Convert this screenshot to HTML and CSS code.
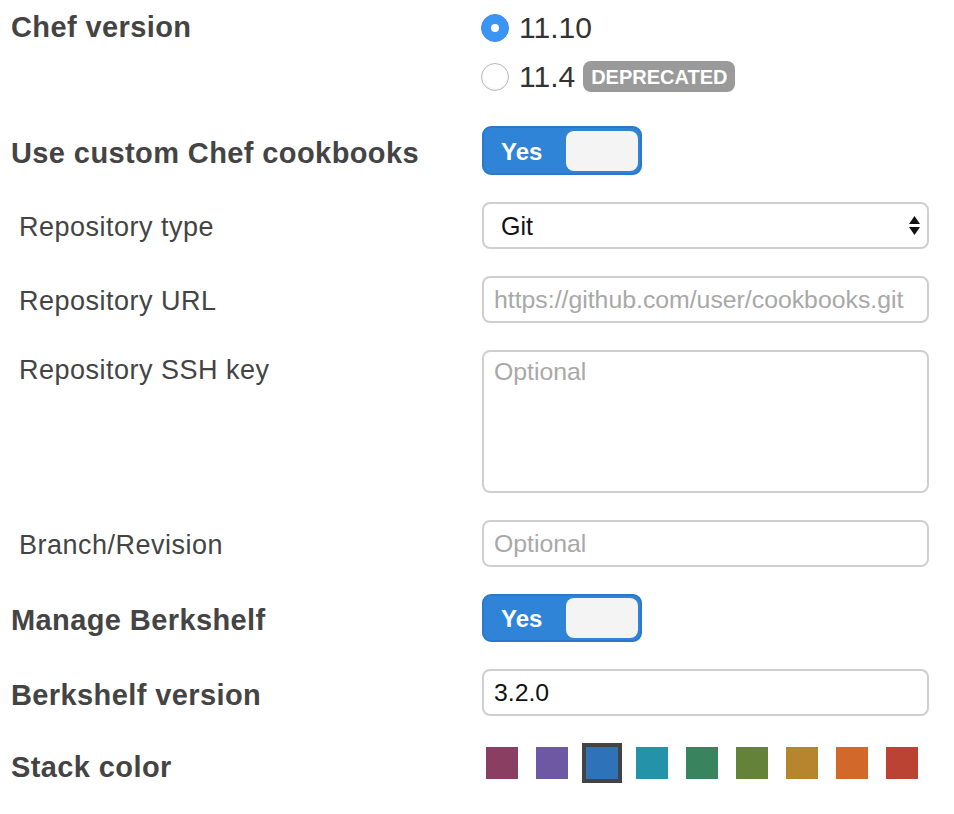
FILE: index.html
```html
<!DOCTYPE html>
<html lang="en">
<head>
<meta charset="utf-8">
<title>Chef settings</title>
<link rel="stylesheet" href="styles.css">
</head>
<body>
<div class="form">
  <div class="row row-radio">
    <div class="label label-radio">Chef version</div>
    <div class="radios">
      <div class="radio-line"><span class="radio checked"></span><span class="radio-text">11.10</span></div>
      <div class="radio-line"><span class="radio"></span><span class="radio-text">11.4</span><span class="badge">DEPRECATED</span></div>
    </div>
  </div>

  <div class="row">
    <div class="label">Use custom Chef cookbooks</div>
    <div class="toggle"><span class="toggle-on">Yes</span><span class="knob"></span></div>
  </div>

  <div class="row">
    <div class="label sub">Repository type</div>
    <div class="select-wrap">
      <select class="select"><option>Git</option></select>
      <svg class="select-arrows" width="11" height="19" viewBox="0 0 11 19"><polygon points="0,8 5.5,0 11,8" fill="#111"/><polygon points="0,11 11,11 5.5,19" fill="#111"/></svg>
    </div>
  </div>

  <div class="row">
    <div class="label sub">Repository URL</div>
    <input class="input" type="text" placeholder="https://github.com/user/cookbooks.git">
  </div>

  <div class="row row-top">
    <div class="label sub label-top">Repository SSH key</div>
    <textarea class="textarea" placeholder="Optional"></textarea>
  </div>

  <div class="row">
    <div class="label sub">Branch/Revision</div>
    <input class="input" type="text" placeholder="Optional">
  </div>

  <div class="row">
    <div class="label">Manage Berkshelf</div>
    <div class="toggle toggle-short"><span class="toggle-on">Yes</span><span class="knob"></span></div>
  </div>

  <div class="row">
    <div class="label">Berkshelf version</div>
    <input class="input" type="text" value="3.2.0">
  </div>

  <div class="row row-top">
    <div class="label label-stack">Stack color</div>
    <div class="swatches">
      <span class="swatch c1"></span>
      <span class="swatch c2"></span>
      <span class="swatch c3 selected"></span>
      <span class="swatch c4"></span>
      <span class="swatch c5"></span>
      <span class="swatch c6"></span>
      <span class="swatch c7"></span>
      <span class="swatch c8"></span>
      <span class="swatch c9"></span>
    </div>
  </div>
</div>
</body>
</html>
```

FILE: styles.css
```css
* { box-sizing: border-box; }

html, body {
  margin: 0;
  padding: 0;
  background: #fff;
}

body {
  font-family: "Liberation Sans", Arial, "Helvetica Neue", sans-serif;
  color: #444;
}

.form {
  padding: 3px 0 0 11px;
}

.row {
  display: grid;
  grid-template-columns: 471px 447px;
  align-items: center;
  margin-bottom: 27px;
}

.row-radio {
  align-items: start;
  margin-bottom: 25px;
}

.row-top {
  align-items: start;
}

.label {
  font-size: 29px;
  font-weight: bold;
  letter-spacing: 0.4px;
  color: #444;
  padding-top: 5px;
  white-space: nowrap;
}

.label.sub {
  font-weight: normal;
  font-size: 27px;
  letter-spacing: 0.5px;
  padding-left: 8px;
  padding-top: 3px;
}

.label-radio {
  line-height: 49px;
  padding-top: 0;
}

.label.label-top {
  line-height: 40px;
  padding-top: 0;
}

.label.label-stack {
  padding-top: 8px;
}

/* radios */
.radios {
  display: flex;
  flex-direction: column;
}

.radio-line {
  display: flex;
  align-items: center;
  height: 49px;
  margin-left: -1px;
}

.radio {
  width: 28px;
  height: 28px;
  border-radius: 50%;
  background: #fff;
  border: 1.5px solid #b9b9b9;
  box-shadow: inset 0 -1px 2px rgba(0,0,0,0.08);
  display: flex;
  align-items: center;
  justify-content: center;
  flex: none;
}

.radio.checked {
  background: #3b95f5;
  border-color: #3b8eeb;
  box-shadow: none;
}

.radio.checked::after {
  content: "";
  width: 8px;
  height: 8px;
  border-radius: 50%;
  background: #fff;
}

.radio-text {
  font-size: 30px;
  color: #333;
  margin-left: 10px;
}

.badge {
  margin-left: 8px;
  height: 31px;
  padding: 1px 8px 0;
  border-radius: 8px;
  background: #9a9a9a;
  color: #fff;
  font-size: 20px;
  font-weight: bold;
  display: inline-flex;
  align-items: center;
  letter-spacing: 0;
}

/* toggle */
.toggle {
  justify-self: start;
  width: 160px;
  height: 49px;
  display: flex;
  align-items: center;
  background: #2f84d8;
  border: 2px solid #2b79cb;
  border-radius: 9px;
  padding: 0 2px 0 17px;
}

.toggle-short {
  height: 48px;
}

.toggle-on {
  flex: 1;
  color: #fff;
  font-size: 24px;
  font-weight: bold;
  padding-top: 2px;
}

.knob {
  width: 72px;
  height: 40px;
  border-radius: 8px;
  background: #f4f4f4;
}

/* select */
.select-wrap {
  position: relative;
  width: 447px;
  height: 47px;
}

.select {
  -webkit-appearance: none;
  appearance: none;
  width: 100%;
  height: 100%;
  border: 2px solid #cfcfcf;
  border-radius: 8px;
  background: #fff;
  font-family: "Liberation Sans", Arial, sans-serif;
  font-size: 25px;
  color: #111;
  padding: 0 40px 0 17px;
  outline: none;
  margin: 0;
}

.select-arrows {
  position: absolute;
  right: 9px;
  top: 14px;
  pointer-events: none;
}

/* inputs */
.input {
  width: 447px;
  height: 47px;
  border: 2px solid #cfcfcf;
  border-radius: 8px;
  background: #fff;
  font-family: "Liberation Sans", Arial, sans-serif;
  font-size: 24.8px;
  color: #111;
  padding: 0 10px;
  margin: 0;
  outline: none;
}

.textarea {
  width: 447px;
  height: 143px;
  border: 2px solid #cfcfcf;
  border-radius: 8px;
  background: #fff;
  font-family: "Liberation Sans", Arial, sans-serif;
  font-size: 24.8px;
  line-height: 30px;
  color: #111;
  padding: 5px 10px;
  margin: 0;
  resize: none;
  outline: none;
  display: block;
}

.input::placeholder,
.textarea::placeholder {
  color: #a8a8a8;
  opacity: 1;
}

/* swatches */
.swatches {
  display: flex;
  gap: 10px;
}

.swatch {
  width: 40px;
  height: 40px;
  border: 4px solid transparent;
  background-clip: content-box;
  display: block;
}

.swatch.selected {
  border-color: #434343;
}

.c1 { background-color: #8a3e62; }
.c2 { background-color: #6f58a3; }
.c3 { background-color: #2e72ba; }
.c4 { background-color: #2493a9; }
.c5 { background-color: #39845f; }
.c6 { background-color: #658338; }
.c7 { background-color: #b8852f; }
.c8 { background-color: #d2692b; }
.c9 { background-color: #ba4334; }
```
